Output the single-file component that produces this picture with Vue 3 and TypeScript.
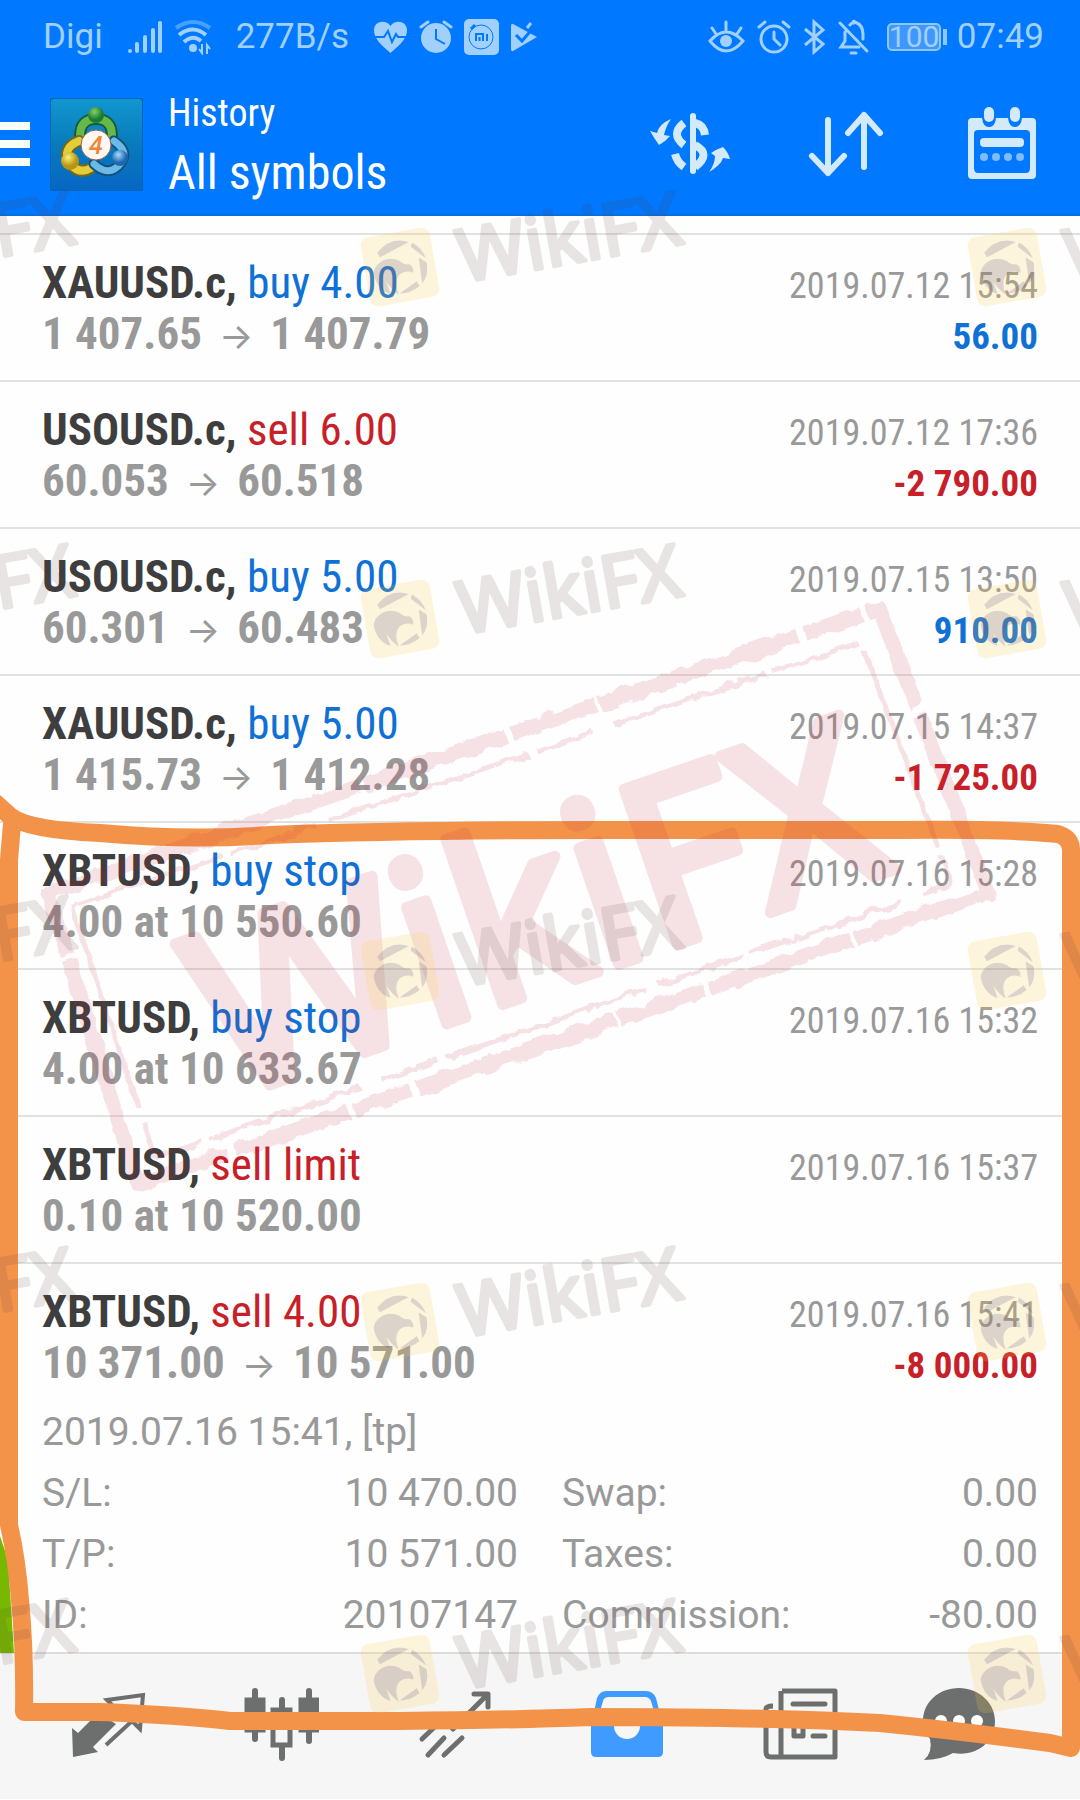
<script setup lang="ts">
interface Order {
  symbol: string
  action: string
  side: 'buy' | 'sell'
  price: string
  close?: string
  time: string
  profit?: string
}

const orders: Order[] = [
  { symbol: 'XAUUSD.c,', action: 'buy 4.00', side: 'buy', price: '1 407.65', close: '1 407.79', time: '2019.07.12 15:54', profit: '56.00' },
  { symbol: 'USOUSD.c,', action: 'sell 6.00', side: 'sell', price: '60.053', close: '60.518', time: '2019.07.12 17:36', profit: '-2 790.00' },
  { symbol: 'USOUSD.c,', action: 'buy 5.00', side: 'buy', price: '60.301', close: '60.483', time: '2019.07.15 13:50', profit: '910.00' },
  { symbol: 'XAUUSD.c,', action: 'buy 5.00', side: 'buy', price: '1 415.73', close: '1 412.28', time: '2019.07.15 14:37', profit: '-1 725.00' },
  { symbol: 'XBTUSD,', action: 'buy stop', side: 'buy', price: '4.00 at 10 550.60', time: '2019.07.16 15:28' },
  { symbol: 'XBTUSD,', action: 'buy stop', side: 'buy', price: '4.00 at 10 633.67', time: '2019.07.16 15:32' },
  { symbol: 'XBTUSD,', action: 'sell limit', side: 'sell', price: '0.10 at 10 520.00', time: '2019.07.16 15:37' },
  { symbol: 'XBTUSD,', action: 'sell 4.00', side: 'sell', price: '10 371.00', close: '10 571.00', time: '2019.07.16 15:41', profit: '-8 000.00' },
]

const details = [
  ['S/L:', '10 470.00'],
  ['Swap:', '0.00'],
  ['T/P:', '10 571.00'],
  ['Taxes:', '0.00'],
  ['ID:', '20107147'],
  ['Commission:', '-80.00'],
]

const marks = [267, 619, 971, 1322, 1674].flatMap((y) => [-207, 400, 1007].map((x) => ({ x, y })))
</script>

<template>
  <div class="screen">
    <header class="top">
      <div class="status">
        <span>Digi</span>
        <span class="group">
          <svg width="36" height="36" viewBox="0 0 36 36" stroke="currentColor" stroke-width="4" stroke-linecap="round">
            <path d="M3 32v0M10 25v7M18 18v14M26 11v21M33 4v28" />
          </svg>
          <svg width="38" height="36" viewBox="0 0 38 36" fill="none" stroke="currentColor" stroke-width="4">
            <path d="M2 9Q19-3 36 9" opacity=".45" />
            <path d="M5 16Q19 5 32 16M10 23Q19 15 27 22" />
            <circle cx="19" cy="29" r="4" fill="currentColor" stroke="none" />
            <path d="M28 25v9l-3-4M33 35v-9l3 4" stroke-width="2" />
          </svg>
        </span>
        <span>277B/s</span>
        <span class="group">
          <svg width="35" height="34" viewBox="0 0 35 34">
            <path fill="currentColor" d="M17.500 33C7 24 1 18 1 10C1 1 13-1 17.500 6C22-1 34 1 34 10C34 18 28 24 17.500 33Z" />
            <path d="M2 17h9l4-6 4 11 4-8 2 3h8" fill="none" stroke="#0078ff" stroke-width="2" />
          </svg>
          <svg width="34" height="36" viewBox="0 0 34 36">
            <circle cx="17" cy="19" r="15" fill="currentColor" />
            <path d="M2 8l7-5M25 3l7 5" stroke="currentColor" stroke-width="3" stroke-linecap="round" />
            <path d="M17 10v10l9 5" fill="none" stroke="#0078ff" stroke-width="2" />
          </svg>
          <svg width="35" height="36" viewBox="0 0 35 36">
            <rect width="35" height="36" rx="5" fill="currentColor" />
            <g fill="none" stroke="#0078ff">
              <circle cx="17" cy="18" r="12" />
              <path d="M7 10l4-4" stroke-width="3" />
              <path d="M12 22v-7h7v7M15.500 18v4M23 15v7" stroke-width="2" />
            </g>
          </svg>
          <svg class="play" width="28" height="34" viewBox="0 0 28 34">
            <path fill="currentColor" d="M3 4L27 17L3 31Q1 32 1 29V6Q1 3 3 4Z" />
            <path d="M6 15l6 6L24 7" fill="none" stroke="#0078ff" stroke-width="3" />
            <path d="M17 8l4-5" stroke="currentColor" stroke-width="3" />
          </svg>
        </span>
        <span class="group right">
          <svg width="37" height="34" viewBox="0 0 37 34" fill="none" stroke="currentColor" stroke-width="3" stroke-linecap="round">
            <path d="M2 21Q18 3 35 21Q18 41 2 21ZM18 2v8M4 8l4 6M33 8l-4 6" />
            <circle cx="18" cy="21" r="6" fill="currentColor" stroke="none" />
          </svg>
          <svg width="34" height="36" viewBox="0 0 34 36" fill="none" stroke="currentColor" stroke-width="3" stroke-linecap="round">
            <circle cx="17" cy="20" r="13" />
            <path d="M2 8l6-5M26 3l6 5M17 13v7l6 6" />
          </svg>
          <svg width="23" height="36" viewBox="0 0 23 36" fill="none" stroke="currentColor" stroke-width="3">
            <path d="M2 10l18 15-9 8V3l9 8L2 26" />
          </svg>
          <svg width="31" height="36" viewBox="0 0 31 36" fill="none" stroke="currentColor" stroke-width="3" stroke-linecap="round">
            <path d="M2 4l27 28M7 13v9l-4 6h18M12 6q1-2 3-2 0-3 2-1 8 3 8 12v5M13 34h5" />
          </svg>
          <span class="battery"><span>100</span></span>
          <span>07:49</span>
        </span>
      </div>

      <div class="bar">
        <button class="menu" aria-label="Menu"><i></i><i></i><i></i></button>
        <svg class="app-icon" width="93" height="93" viewBox="0 0 93 93">
          <defs>
            <linearGradient id="tile" x2="0" y2="1">
              <stop offset="0" stop-color="#1297d0" />
              <stop offset=".5" stop-color="#087bbb" />
              <stop offset="1" stop-color="#0766c5" />
            </linearGradient>
            <radialGradient id="green" cx=".4" cy=".3"><stop stop-color="#8ccf6a" /><stop offset="1" stop-color="#187c31" /></radialGradient>
            <radialGradient id="gold" cx=".4" cy=".3"><stop stop-color="#fff077" /><stop offset="1" stop-color="#b59412" /></radialGradient>
            <radialGradient id="sky" cx=".4" cy=".3"><stop stop-color="#a6dcfa" /><stop offset="1" stop-color="#1a68b0" /></radialGradient>
          </defs>
          <rect width="93" height="93" rx="4" fill="url(#tile)" stroke="#0864b5" stroke-width="2" />
          <g fill="none" stroke-linecap="round">
            <path d="M30 38Q30 21 46 21T62 38" stroke="#145c35" stroke-width="12" />
            <path d="M30 38Q30 21 46 21T62 38" stroke="#67b74d" stroke-width="8" />
            <path d="M29 43Q11 50 20 66Q30 77 41 70" stroke="#756817" stroke-width="12" />
            <path d="M29 43Q11 50 20 66Q30 77 41 70" stroke="#e4cd39" stroke-width="8" />
            <path d="M64 43Q79 53 71 65Q59 80 44 66" stroke="#15507a" stroke-width="11" />
            <path d="M64 43Q79 53 71 65Q59 80 44 66" stroke="#6ab9e7" stroke-width="7" />
          </g>
          <circle cx="46" cy="17" r="8" fill="url(#green)" />
          <circle cx="20" cy="63" r="9" fill="url(#gold)" />
          <circle cx="70" cy="60" r="8" fill="url(#sky)" />
          <circle cx="46" cy="47" r="15" fill="#fff7f2" stroke="#8b6855" />
          <text x="46" y="56" text-anchor="middle" font-family="Roboto, sans-serif" font-size="25" font-weight="500" font-style="italic" fill="#ed8637">4</text>
        </svg>
        <div class="titles">
          <div class="kicker">History</div>
          <h1>All symbols</h1>
        </div>
        <div class="actions">
          <button aria-label="Currency">
            <svg width="80" height="76" viewBox="0 0 80 76" fill="none" stroke="currentColor" stroke-linecap="round">
              <path d="M43 10v55" stroke-width="6" />
              <path d="M34 17Q20 28 34 39M45 17Q54 19 55 29M45 39Q62 48 45 61M25 48Q27 56 34 61" stroke-width="8" stroke-linecap="butt" />
              <path fill="currentColor" stroke="none" d="M21 13Q9 18 7 27L0 25Q4 32 9 39Q15 36 20 30L14 29Q16 20 21 13ZM59 66Q65 58 65 50L61 47Q67 43 73 41Q78 46 80 53L73 52Q71 59 59 66Z" />
            </svg>
          </button>
          <button aria-label="Sort">
            <svg width="80" height="76" viewBox="0 0 80 76" fill="none" stroke="currentColor" stroke-width="6" stroke-linecap="round" stroke-linejoin="round">
              <path d="M22 14v53M6 50l16 17 16-17M58 61V9M42 27L58 9l16 18" />
            </svg>
          </button>
          <button aria-label="Calendar">
            <svg width="80" height="76" viewBox="0 0 80 76">
              <path fill="currentColor" fill-rule="evenodd" d="M10 12h10q1 9 7 9t7-9h12q1 9 7 9t7-9h10q4 0 4 4v53q0 4-4 4H10q-4 0-4-4V16q0-4 4-4ZM16 24q-4 0-4 4v34q0 5 4 5h48q4 0 4-5V28q0-4-4-4Z" />
              <rect x="22" y="1" width="10" height="15" rx="5" fill="currentColor" />
              <rect x="48" y="1" width="10" height="15" rx="5" fill="currentColor" />
              <rect x="18" y="32" width="44" height="9" rx="4" fill="currentColor" />
              <g fill="currentColor" opacity=".6"><circle cx="22" cy="51" r="4" /><circle cx="34" cy="51" r="4" /><circle cx="46" cy="51" r="4" /><circle cx="58" cy="51" r="4" /></g>
            </svg>
          </button>
        </div>
      </div>
    </header>

    <main>
      <ul class="orders">
        <li v-for="(o, i) in orders" :key="i">
          <div class="line">
            <span><strong>{{ o.symbol }}</strong>&#32;<span :class="o.side">{{ o.action }}</span></span>
            <time>{{ o.time }}</time>
          </div>
          <div class="line prices">
            <span>{{ o.price }}<template v-if="o.close"><span class="arrow">→</span>{{ o.close }}</template></span>
            <span v-if="o.profit" class="profit" :class="o.profit.startsWith('-') ? 'sell' : 'buy'">{{ o.profit }}</span>
          </div>
        </li>
      </ul>
      <section class="details">
        <p>2019.07.16 15:41, [tp]</p>
        <dl>
          <div v-for="[label, value] in details" :key="label">
            <dt>{{ label }}</dt>
            <dd>{{ value }}</dd>
          </div>
        </dl>
      </section>
    </main>

    <nav>
      <button aria-label="Quotes">
        <svg width="76" height="76" viewBox="0 0 76 76">
          <path fill="currentColor" d="M2 42L8 47L28 27L46 38L23 61L28 66L3 71Z" />
          <path d="M44 21L37 14L73 9L70 43L62 35L36 59" fill="none" stroke="currentColor" stroke-width="4" />
        </svg>
      </button>
      <button aria-label="Charts">
        <svg width="76" height="76" viewBox="0 0 76 76" stroke="currentColor" stroke-linecap="round">
          <path d="M12 5v48M39 14v58M66 5v50" stroke-width="6" />
          <rect x="3" y="13" width="18" height="32" fill="currentColor" stroke-width="3" />
          <rect x="57" y="13" width="18" height="32" fill="currentColor" stroke-width="3" />
          <rect x="30" y="24" width="17" height="35" fill="#f6f6f6" stroke-width="5" />
        </svg>
      </button>
      <button aria-label="Trade">
        <svg width="76" height="76" viewBox="0 0 76 76" fill="none" stroke="currentColor" stroke-width="5" stroke-linecap="round" stroke-linejoin="round">
          <path d="M6 53L27 33L37 43L71 9M58 8H72V21M12 69L28 52M28 69L46 52" />
        </svg>
      </button>
      <button class="active" aria-label="History">
        <svg width="76" height="76" viewBox="0 0 76 76">
          <path fill="currentColor" fill-rule="evenodd" d="M2 40L8 12Q11 5 17 5H57Q64 5 67 12L74 40V66Q74 71 69 71H7Q2 71 2 66ZM20 11Q15 11 14 15L8 36H25V40A13 13 0 0 0 51 40V36H68L62 15Q60 11 56 11Z" />
        </svg>
      </button>
      <button aria-label="News">
        <svg width="76" height="76" viewBox="0 0 76 76" fill="none" stroke="currentColor" stroke-width="5" stroke-linejoin="round">
          <path d="M20 5H73V71H9Q4 71 4 66V23Q4 20 11 20M19 5V71" />
          <path d="M31 18H63M51 38H63M51 50H63" stroke-linecap="round" />
          <rect x="32" y="35" width="9" height="15" />
        </svg>
      </button>
      <button aria-label="Messages">
        <svg width="76" height="76" viewBox="0 0 76 76">
          <path fill="currentColor" d="M38 2C57 2 74 16 74 35C74 56 56 71 32 67Q20 74 3 74Q12 66 9 53Q2 45 2 35C2 16 18 2 38 2Z" />
          <g fill="#fff"><circle cx="20" cy="35" r="6" /><circle cx="38" cy="35" r="6" /><circle cx="56" cy="35" r="6" /></g>
        </svg>
      </button>
    </nav>

    <svg class="overlay" viewBox="0 0 1080 1800" preserveAspectRatio="none">
      <defs>
        <filter id="rough" x="-5%" y="-5%" width="110%" height="110%">
          <feTurbulence type="fractalNoise" baseFrequency=".06" numOctaves="3" seed="4" result="noise" />
          <feDisplacementMap in="SourceGraphic" in2="noise" scale="9" />
        </filter>
      </defs>

      <!-- left-edge tab and hand-drawn frame -->
      <path d="M0 1536L8 1560L14 1653H0Z" fill="#76b900" />
      <path d="M-8 800L10 816Q28 830 100 833Q190 841 270 835Q400 830 600 830H900Q1010 829 1058 834Q1071 838 1071 850V1748L1050 1743Q960 1731 880 1723Q760 1717 590 1717Q510 1720 400 1721H230Q180 1715 100 1712H24Q25 1650 20 1600Q17 1560 9 1525V860L12 824" fill="none" stroke="#f3934a" stroke-width="18" stroke-linejoin="round" stroke-linecap="round" />

      <!-- tilted stamp -->
      <g class="stamp" fill="none" stroke="#c9203f" stroke-linejoin="round">
        <g filter="url(#rough)">
          <path d="M48 893L879 608L988 893L138 1184Z" stroke-width="15" stroke-dasharray="330 4 150 6 90 3 210 7 60 5 120 9" />
          <path d="M72 907L861 642L952 884L155 1158Z" stroke-width="5" stroke-dasharray="160 7 90 14 210 9 60 22" />
        </g>
        <text transform="translate(226 1100) rotate(-19)" font-size="230" stroke-width="11" fill="#c9203f">WikiFX</text>
      </g>

      <g v-for="m in marks" :key="m.x + '-' + m.y" :transform="`translate(${m.x} ${m.y}) rotate(-10)`">
        <rect x="-35" y="-35" width="70" height="70" rx="8" fill="#ffcf45" opacity=".18" />
        <g opacity=".2" fill="#5d5288">
          <path d="M-27 1Q-27 18-14 25L-16 12Q-12 22-6 27Q-9 12-1 7Q6 4 12 8Q14 3 10-1Q3-2 1-6Q-9-13-19-8Q-25-5-27 1Z" />
          <path d="M-20-18Q-4-32 13-23L-18-13ZM16-22Q25-15 27-4L14-18ZM27 0Q27 14 19 20L20-6ZM16 22Q6 28-5 26L14 17Z" />
        </g>
        <text class="mark" x="59" y="26" font-size="73" stroke-width="4" stroke-linejoin="round">WikiFX</text>
      </g>
    </svg>
  </div>
</template>

<style>
body {
  margin: 0;
}
</style>

<style scoped>
.screen {
  position: relative;
  min-height: 100vh;
  overflow: hidden;
  background: #fdfefd;
  color: #999;
  font-family: 'Roboto Condensed', 'Liberation Sans Narrow', Roboto, sans-serif;
}
button {
  padding: 0;
  border: 0;
  background: none;
  color: inherit;
}
svg {
  display: block;
  flex: none;
}
.top {
  background: #0078ff;
  border-bottom: 2px solid #0870e2;
}
.status {
  display: flex;
  align-items: center;
  gap: 24px;
  height: 74px;
  padding: 0 36px 0 43px;
  color: #a0d0fb;
  font: 35px/44px Roboto, sans-serif;
}
.group {
  display: flex;
  align-items: center;
  gap: 11px;
}
.right {
  gap: 12px;
  margin-left: auto;
}
.battery {
  position: relative;
  width: 50px;
  height: 24px;
  margin: 0 4px 0 6px;
  border: 2px solid #8cc7ff;
  border-radius: 5px;
  background: #3f97fb;
  font-size: 30px;
  line-height: 24px;
  text-align: center;
}
.battery::after {
  content: '';
  position: absolute;
  top: 4px;
  right: -8px;
  width: 4px;
  height: 16px;
  background: #8cc7ff;
}
.bar {
  display: flex;
  align-items: center;
  height: 140px;
  color: #d3eafa;
}
.menu {
  display: grid;
  gap: 10px;
  width: 30px;
}
.menu i {
  height: 8px;
  background: #f8fff8;
}
.app-icon {
  margin-left: 20px;
}
.titles {
  margin-left: 25px;
  padding-bottom: 2px;
  color: #fff;
  line-height: 60px;
}
.kicker {
  font-size: 38px;
}
h1 {
  margin: 0;
  font-size: 48px;
  font-weight: 400;
}
.actions {
  display: flex;
  gap: 76px;
  margin-left: auto;
  padding-right: 38px;
}
.orders {
  margin: 17px 0 0;
  padding: 0;
  list-style: none;
  border-top: 2px solid #e0e2e0;
}
.orders li {
  padding: 22px 42px 21px;
  border-bottom: 2px solid #e0e2e0;
}
.orders li:last-child {
  padding-bottom: 0;
  border-bottom: 0;
}
.line {
  display: flex;
  justify-content: space-between;
  align-items: baseline;
  height: 51px;
  font-size: 45px;
  line-height: 51px;
}
strong {
  color: #3e3e3e;
}
.prices {
  font-weight: 700;
}
time {
  font-size: 36px;
}
.profit {
  font-size: 37px;
}
.buy {
  color: #0f70d6;
}
.sell {
  color: #c82029;
}
.arrow {
  margin: 0 17px;
  font: 400 36px/36px Inter, sans-serif;
}
.details {
  padding: 14px 42px 6px;
  border-bottom: 2px solid #dcdedc;
  font: 39px/61px Roboto, sans-serif;
}
.details p,
.details dl,
.details dd {
  margin: 0;
}
.details dl {
  display: grid;
  grid-template-columns: 1fr 1fr;
  column-gap: 44px;
}
.details dl div {
  display: flex;
  justify-content: space-between;
}
nav {
  display: grid;
  grid-template-columns: repeat(5, 173fr) 145fr;
  justify-items: center;
  padding: 32px 49px 37px 21px;
  background: #f6f6f6;
  color: #6c6f6e;
}
.active {
  color: #3f9bff;
}
.overlay {
  position: absolute;
  inset: 0;
  width: 100%;
  height: 100%;
  pointer-events: none;
  font-family: 'Noto Sans', sans-serif;
  font-weight: 400;
}
.stamp {
  opacity: 0.12;
}
.mark {
  fill: #5a4040;
  stroke: #5a4040;
  opacity: 0.13;
}
</style>
